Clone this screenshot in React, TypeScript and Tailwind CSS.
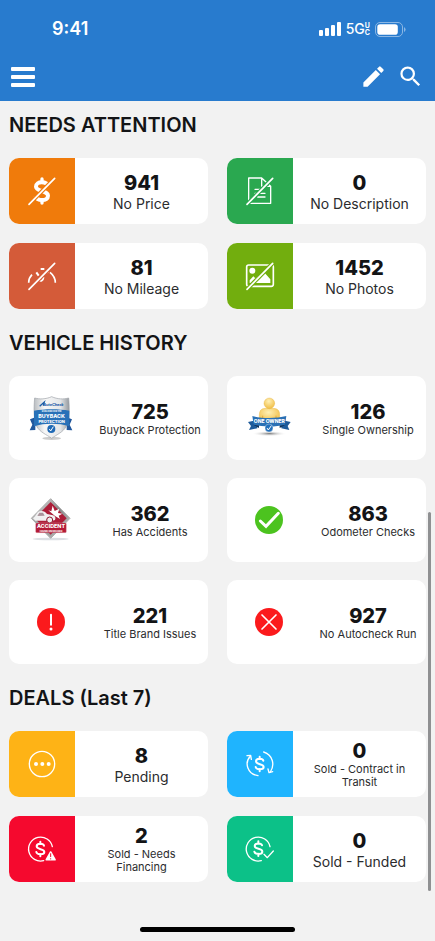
import type { ReactNode } from 'react'
import { MdEdit, MdSearch } from 'react-icons/md'

interface Stat {
  value: number
  label: string
  icon: ReactNode
  color?: string
  small?: boolean
}

const DOLLAR = 'M11 -10 C9 -18 -11 -18 -11 -8 C-11 3 12 -2 12 9 C12 18 -11 18 -12 9 M0 -22 V-15 M0 15 V22'

export default function App() {
  return (
    <div className="relative flex min-h-screen flex-col bg-[#f2f2f2] font-['Inter',sans-serif] text-[#131416]">
      <header className="bg-[#287bce] text-white">
        <StatusBar />
        <nav className="flex h-[49px] items-center justify-between pr-[11px] pl-[11px]">
          <button aria-label="Menu" className="flex w-6 flex-col gap-1">
            <span className="h-1 rounded-[1px] bg-white" />
            <span className="h-1 rounded-[1px] bg-white" />
            <span className="h-1 rounded-[1px] bg-white" />
          </button>
          <div className="flex items-center gap-[10px]">
            <button aria-label="Edit">
              <MdEdit size={27} />
            </button>
            <button aria-label="Search">
              <MdSearch size={27} />
            </button>
          </div>
        </nav>
      </header>

      <main className="flex flex-1 flex-col gap-5 px-[9px] pt-[10px]">
        <Section title="NEEDS ATTENTION">
          <div className="grid grid-cols-2 gap-[19px]">
            {attention.map((s) => (
              <StatCard key={s.label} stat={s} />
            ))}
          </div>
        </Section>

        <Section title="VEHICLE HISTORY">
          <div className="grid grid-cols-2 gap-x-[19px] gap-y-[18px]">
            {history.map((s) => (
              <HistoryCard key={s.label} stat={s} />
            ))}
          </div>
        </Section>

        <Section title="DEALS (Last 7)">
          <div className="grid grid-cols-2 gap-[19px]">
            {deals.map((s) => (
              <StatCard key={s.label} stat={s} />
            ))}
          </div>
        </Section>
      </main>

      <footer className="flex justify-center pt-5 pb-[9px]">
        <div className="h-[5px] w-[155px] rounded-full bg-black" />
      </footer>

      {/* scroll indicator */}
      <div className="absolute top-[512px] right-1 h-[379px] w-[3px] rounded-full bg-[#8f9092]" />
    </div>
  )
}

function StatusBar() {
  return (
    <div className="flex h-[52px] items-center justify-between pt-[6px] pr-[29px] pl-[52px]">
      <span className="text-[18px] leading-6 font-semibold">9:41</span>
      <div className="flex items-center gap-[5px]">
        <svg width="22" height="14" viewBox="0 0 22 14" fill="#fff">
          <rect x="0" y="8" width="4" height="6" rx="1" />
          <rect x="6" y="6" width="4" height="8" rx="1" />
          <rect x="12" y="3" width="4" height="11" rx="1" />
          <rect x="18" y="0" width="4" height="14" rx="1" />
        </svg>
        <div className="flex items-center">
          <span className="text-sm leading-4 font-medium">5G</span>
          <span className="flex flex-col text-[7px] leading-[7px] font-bold">
            <span>U</span>
            <span>C</span>
          </span>
        </div>
        <svg width="31" height="15" viewBox="0 0 31 15">
          <rect x=".5" y=".5" width="27" height="14" rx="4.5" fill="none" stroke="#8bb7e4" />
          <rect x="2.3" y="2.3" width="20.5" height="10.4" rx="2.8" fill="#fff" />
          <path d="M29 5 Q30.6 6 30.6 7.5 Q30.6 9 29 10 Z" fill="#8bb7e4" />
        </svg>
      </div>
    </div>
  )
}

function Section({ title, children }: { title: string; children: ReactNode }) {
  return (
    <section className="flex flex-col gap-[19px]">
      <h2 className="text-xl leading-7 font-semibold">{title}</h2>
      {children}
    </section>
  )
}

function StatCard({ stat }: { stat: Stat }) {
  return (
    <button className="flex min-h-[66px] overflow-hidden rounded-[10px] bg-white">
      <span className={`flex w-[66px] shrink-0 items-center justify-center self-stretch ${stat.color}`}>
        {stat.icon}
      </span>
      <StatText stat={stat} />
    </button>
  )
}

function HistoryCard({ stat }: { stat: Stat }) {
  return (
    <button className="flex min-h-[84px] overflow-hidden rounded-[10px] bg-white">
      <span className="flex w-[83px] shrink-0 items-center justify-center self-stretch">{stat.icon}</span>
      <StatText stat={stat} />
    </button>
  )
}

function StatText({ stat }: { stat: Stat }) {
  return (
    <span className="flex flex-1 flex-col items-center justify-center self-stretch px-1 text-center">
      <span className="text-xl leading-6 font-extrabold">{stat.value}</span>
      <span
        className={
          stat.small
            ? 'max-w-[110px] text-[11px] leading-[13px] text-[#2b2c2e]'
            : 'text-sm leading-[17px] text-[#2b2c2e]'
        }
      >
        {stat.label}
      </span>
    </span>
  )
}

function TileIcon({ children }: { children: ReactNode }) {
  return (
    <svg width="30" height="30" viewBox="0 0 90 90" fill="none" stroke="#fff" strokeWidth="4" strokeLinecap="round" strokeLinejoin="round">
      {children}
    </svg>
  )
}

function Slash({ bg }: { bg: string }) {
  return (
    <>
      <path d="M8 83 L81 9" stroke={bg} strokeWidth="12" strokeLinecap="butt" />
      <path d="M6 85 L83 7" strokeWidth="5" />
    </>
  )
}

function NoPriceIcon() {
  return (
    <TileIcon>
      <path
        d="M64 31 C60 15 27 14 27 32 C27 47 63 43 63 59 C63 77 30 76 26 60"
        strokeWidth="12"
        strokeLinecap="butt"
      />
      <path d="M45 9 V18 M45 74 V81" strokeWidth="10" />
      <Slash bg="#f07b0b" />
    </TileIcon>
  )
}

function NoDescriptionIcon() {
  return (
    <TileIcon>
      <path d="M50 6 H11 V82 H77 V31 L50 6 V31 H77" />
      <path d="M30 40 H45 M30 52 H60 M38 63 H60" />
      <Slash bg="#2aa850" />
    </TileIcon>
  )
}

function NoMileageIcon() {
  return (
    <TileIcon>
      <path d="M5 65 C5 55 9 47 15 41 M69 34 C79 42 85 53 85 65" strokeWidth="5" strokeLinecap="butt" />
      <path d="M28 34 L35 44 M41 24 H52 M58 35 L64 31" strokeWidth="6" strokeLinecap="butt" />
      <path d="M38 57 C40 61 48 60 49 50" strokeWidth="6" />
      <Slash bg="#d45b39" />
    </TileIcon>
  )
}

function NoPhotosIcon() {
  return (
    <TileIcon>
      <rect x="5" y="12" width="80" height="64" rx="6" strokeWidth="5" />
      <circle cx="22" cy="29" r="9" fill="#fff" stroke="none" />
      <path d="M14 64 V58 L25 46 L31 52 L40 44 L46 50 L60 37 L76 55 V66 H14 Z" fill="#fff" stroke="none" />
      <Slash bg="#72ae0e" />
    </TileIcon>
  )
}

function PendingIcon() {
  return (
    <TileIcon>
      <circle cx="45" cy="45" r="38" />
      <g fill="#fff" stroke="none">
        <circle cx="27" cy="45" r="6" />
        <circle cx="46" cy="45" r="6" />
        <circle cx="65" cy="45" r="6" />
      </g>
    </TileIcon>
  )
}

function TransitIcon() {
  return (
    <TileIcon>
      <path d="M16 22 C-3 42 8 76 39 80 M56 9 C84 18 90 48 76 69" />
      <path d="M6 20 L17 19 L19 31 M69 60 L72 71 L83 68" />
      <path d={DOLLAR} transform="translate(44 45)" strokeWidth="6" />
    </TileIcon>
  )
}

function NeedsFinancingIcon() {
  return (
    <TileIcon>
      <path d="M76 38 A36 36 0 1 0 50 80" />
      <path d={DOLLAR} transform="translate(40 45)" strokeWidth="6" />
      <path d="M71 54 L58 77 H84 Z" fill="#fff" strokeWidth="5" />
      <path d="M71 59 V68 M71 74 V75" stroke="#f5092e" strokeWidth="3" />
    </TileIcon>
  )
}

function FundedIcon() {
  return (
    <TileIcon>
      <path d="M75 38 A36 36 0 1 0 49 80" />
      <path d={DOLLAR} transform="translate(40 44)" strokeWidth="6" />
      <path d="M57 61 L67 71 L85 51" />
    </TileIcon>
  )
}

function BuybackBadge() {
  return (
    <svg width="48" height="48" viewBox="0 0 144 144">
      <defs>
        <linearGradient id="shield" x1="0" x2="1">
          <stop offset="0" stopColor="#b9bdc1" />
          <stop offset=".3" stopColor="#f7f7f7" />
          <stop offset=".75" stopColor="#e4e6e8" />
          <stop offset="1" stopColor="#94999e" />
        </linearGradient>
      </defs>
      <ellipse cx="74" cy="133" rx="28" ry="5" fill="#ccc" />
      <path d="M9 76 L25 70 V108 L8 109 L16 92 Z M135 76 L119 70 V108 L136 109 L128 92 Z" fill="#21589d" />
      <path
        d="M74 8 C92 16 110 16 125 12 C128 45 128 78 118 97 C108 115 90 121 74 133 C58 121 39 115 29 97 C20 78 20 45 23 12 C38 16 56 16 74 8 Z"
        fill="url(#shield)"
        stroke="#9da2a7"
        strokeWidth="2"
      />
      <path d="M21 50 C52 44 96 44 127 50 V97 C96 87 52 87 21 97 Z" fill="#2871b8" />
      <path d="M38 37 L52 24 L49 35" fill="none" stroke="#1e5fa8" strokeWidth="4" />
      <g fontFamily="Inter, sans-serif" fontWeight="800" textAnchor="middle">
        <text x="79" y="35" fontSize="11" fontStyle="italic" fill="#1e5fa8">AutoCheck</text>
        <text x="74" y="54" fontSize="6" fill="#fff">QUALIFIED FOR THE</text>
        <text x="74" y="72" fontSize="16" fill="#fff">BUYBACK</text>
        <text x="74" y="88" fontSize="12" fill="#fff">PROTECTION</text>
      </g>
      <circle cx="73" cy="105" r="12" fill="#1f69b5" />
      <path d="M67 105 L71 111 L79 98" fill="none" stroke="#fff" strokeWidth="3" />
    </svg>
  )
}

function OneOwnerBadge() {
  return (
    <svg width="48" height="48" viewBox="0 0 144 144">
      <defs>
        <radialGradient id="gold" cx=".45" cy=".3" r=".8">
          <stop offset="0" stopColor="#fff0b5" />
          <stop offset="1" stopColor="#eeb634" />
        </radialGradient>
        <radialGradient id="ground">
          <stop offset="0" stopColor="#777" />
          <stop offset="1" stopColor="#fff" stopOpacity="0" />
        </radialGradient>
      </defs>
      <ellipse cx="73" cy="119" rx="52" ry="8" fill="url(#ground)" />
      <path d="M43 84 V62 Q43 44 60 43 H86 Q104 44 104 62 V84 Z" fill="url(#gold)" stroke="#e5aa2f" />
      <circle cx="73" cy="28" r="16" fill="url(#gold)" stroke="#e5aa2f" />
      <path d="M53 84 V65 M93 84 V65" stroke="#d99a26" strokeWidth="2" />
      <path d="M9 84 L37 78 V103 L12 108 L18 96 Z M137 84 L109 78 V103 L133 108 L128 96 Z" fill="#1e5b9b" />
      <path d="M25 92 L42 90 V102 Z M121 92 L104 90 V102 Z" fill="#0e2d52" />
      <path d="M22 66 C52 74 94 74 124 66 L120 92 C92 99 54 99 26 92 Z" fill="#2a70b4" />
      <text x="73" y="87" textAnchor="middle" fontFamily="Inter, sans-serif" fontSize="15" fontWeight="800" fill="#fff">
        ONE OWNER
      </text>
      <circle cx="72" cy="102" r="12" fill="#2370bb" stroke="#fff" strokeWidth="1" />
      <path d="M66 102 L70 108 L79 95" fill="none" stroke="#fff" strokeWidth="3" />
    </svg>
  )
}

function AccidentBadge() {
  return (
    <svg width="48" height="48" viewBox="0 0 144 144">
      <defs>
        <linearGradient id="steel" x1="0" y1="0" x2="1" y2="1">
          <stop offset="0" stopColor="#eee" />
          <stop offset=".5" stopColor="#858585" />
          <stop offset="1" stopColor="#d5d5d5" />
        </linearGradient>
      </defs>
      <ellipse cx="71" cy="129" rx="54" ry="4" fill="#dcdfe3" />
      <path d="M71 8 L129 67 L71 127 L13 67 Z" fill="url(#steel)" stroke="#aaa" strokeWidth="3" strokeLinejoin="round" />
      <path d="M71 18 L119 67 L71 116 L23 67 Z" fill="#ad1d38" />
      <path d="M64 43 L73 46 L77 29 L83 45 L97 38 L93 51 L106 53 L95 59 L99 69 L84 60 Z" fill="#fff" />
      <path d="M23 62 L33 48 C41 42 54 44 60 54 L78 58 C85 61 87 66 84 72 L76 74 H25 L18 67 Z" fill="#f1f1f2" />
      <path d="M31 60 L37 50 H48 L53 59 Z" fill="#a9929a" />
      <circle cx="68" cy="72" r="9" fill="#eee" stroke="#8e1830" strokeWidth="3" />
      <rect x="26" y="81" width="92" height="29" rx="3" fill="#b41a36" stroke="#e2b5bd" strokeWidth="1" />
      <g fontFamily="Inter, sans-serif" fontWeight="800" textAnchor="middle" fill="#fff">
        <text x="72" y="96" fontSize="16">ACCIDENT</text>
        <text x="72" y="107" fontSize="7">FOUND ON RECORD</text>
      </g>
    </svg>
  )
}

function RoundIcon({ fill, children }: { fill: string; children: ReactNode }) {
  return (
    <svg width="28" height="28" viewBox="0 0 84 84" fill="none" stroke="#fff" strokeLinecap="round">
      <circle cx="42" cy="42" r="42" fill={fill} stroke="none" />
      {children}
    </svg>
  )
}

const attention: Stat[] = [
  { value: 941, label: 'No Price', icon: <NoPriceIcon />, color: 'bg-[#f07b0b]' },
  { value: 0, label: 'No Description', icon: <NoDescriptionIcon />, color: 'bg-[#2aa850]' },
  { value: 81, label: 'No Mileage', icon: <NoMileageIcon />, color: 'bg-[#d45b39]' },
  { value: 1452, label: 'No Photos', icon: <NoPhotosIcon />, color: 'bg-[#72ae0e]' },
]

const history: Stat[] = [
  { value: 725, label: 'Buyback Protection', icon: <BuybackBadge />, small: true },
  { value: 126, label: 'Single Ownership', icon: <OneOwnerBadge />, small: true },
  { value: 362, label: 'Has Accidents', icon: <AccidentBadge />, small: true },
  {
    value: 863,
    label: 'Odometer Checks',
    icon: (
      <RoundIcon fill="#4cc31f">
        <path d="M16 45 L33 61 L70 22" strokeWidth="9" />
      </RoundIcon>
    ),
    small: true,
  },
  {
    value: 221,
    label: 'Title Brand Issues',
    icon: (
      <RoundIcon fill="#fb1a1c">
        <path d="M42 20 V50" strokeWidth="6" />
        <circle cx="42" cy="63" r="4.5" fill="#fff" stroke="none" />
      </RoundIcon>
    ),
    small: true,
  },
  {
    value: 927,
    label: 'No Autocheck Run',
    icon: (
      <RoundIcon fill="#fb1a1c">
        <path d="M21 21 L63 63 M63 21 L21 63" strokeWidth="5" />
      </RoundIcon>
    ),
    small: true,
  },
]

const deals: Stat[] = [
  { value: 8, label: 'Pending', icon: <PendingIcon />, color: 'bg-[#feb316]' },
  { value: 0, label: 'Sold - Contract in Transit', icon: <TransitIcon />, color: 'bg-[#1fb4fe]', small: true },
  { value: 2, label: 'Sold - Needs Financing', icon: <NeedsFinancingIcon />, color: 'bg-[#f5092e]', small: true },
  { value: 0, label: 'Sold - Funded', icon: <FundedIcon />, color: 'bg-[#0cc188]' },
]
